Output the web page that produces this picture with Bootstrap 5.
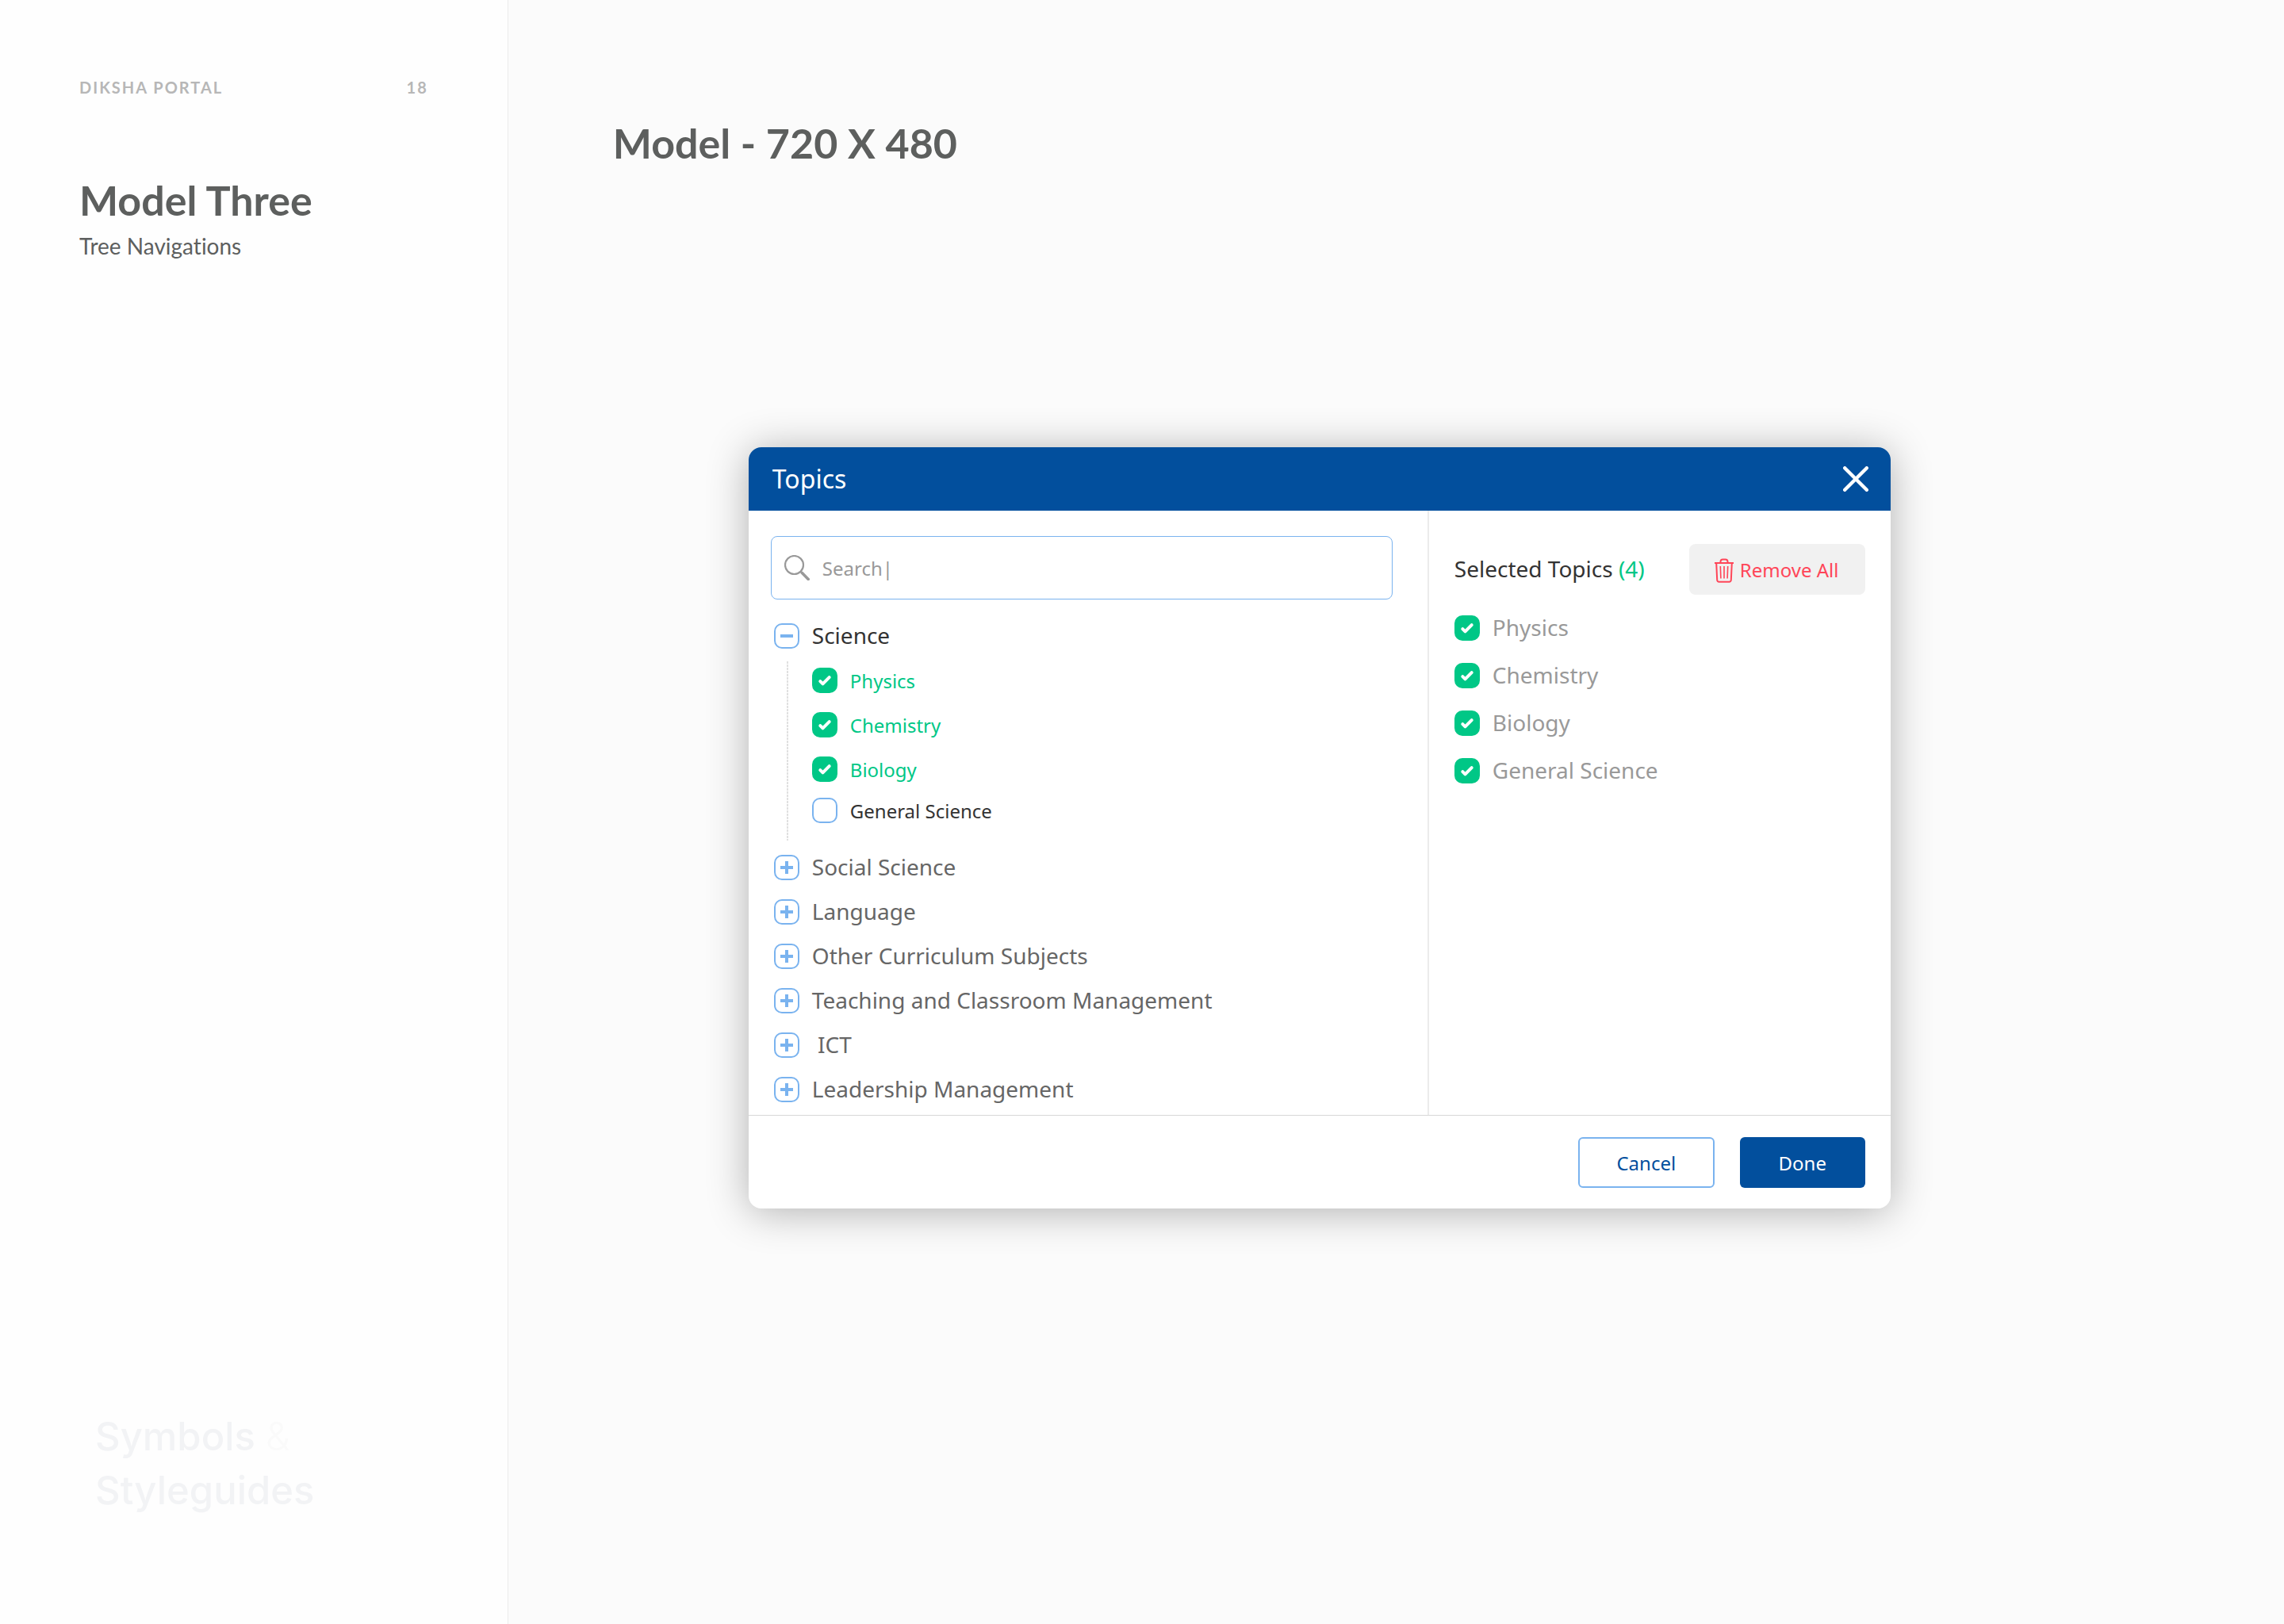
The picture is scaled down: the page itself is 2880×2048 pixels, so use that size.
<!DOCTYPE html>
<html lang="en">
<head>
<meta charset="utf-8">
<meta name="viewport" content="width=device-width, initial-scale=1">
<title>Diksha Portal – Model Three</title>
<link href="https://cdn.jsdelivr.net/npm/bootstrap@5.3.0/dist/css/bootstrap.min.css" rel="stylesheet">
<style>
  :root {
    --brand: #024f9d;
    --sky: #7ab3ef;
    --leaf: #00c786;
    --ink: #333333;
    --slate: #5d5f5e;
  }
  body { background: #fbfbfb; font-family: "Noto Sans", sans-serif; color: var(--ink); }
  .guide-side {
    flex: 0 0 22.25%;
    background: #fefefe;
    border-right: 1px solid #ececec;
    padding: 98px 100px 134px;
    font-family: Lato, sans-serif;
    font-variant-ligatures: none;
    color: var(--slate);
  }
  .guide-meta { font-size: 20px; line-height: 24px; font-weight: 700; letter-spacing: 2px; color: #b7b7b7; margin-bottom: 98px; }
  .guide-title { font-family: Lato, sans-serif; font-size: 52px; line-height: 64px; font-weight: 700; color: var(--slate); margin: 0; }
  .guide-sub { font-size: 28px; line-height: 36px; margin: 8px 0 0; }
  .guide-mark { font-family: Inter, sans-serif; font-size: 49px; line-height: 68px; font-weight: 500; color: #f2f3f5; padding-left: 20px; margin: auto 0 0; }
  .guide-mark span { font-weight: 300; color: #fafafa; }
  .guide-main { padding: 148px 132px; }

  .topics { max-width: 1440px; margin: 352px 0 0 171px; border: 0; border-radius: 16px; background: #fff; box-shadow: 0 4px 52px rgba(0, 0, 0, .3); }
  .topics-head { height: 80px; padding: 0 28px 0 30px; background: var(--brand); color: #fff; border-radius: 16px 16px 0 0; }
  .topics-head h2 { font-size: 32px; line-height: 44px; font-weight: 400; margin: 0; }
  .bare { background: none; border: 0; padding: 0; line-height: 0; }
  .pane-tree { flex: 0 0 858px; border-right: 2px solid #ebebeb; padding: 32px 44px 12px 28px; }
  .pane-picked { padding: 42px 32px 32px; }

  .search-box { height: 80px; border: 1px solid var(--sky); border-radius: 8px; padding: 0 16px; gap: 16px; margin-bottom: 26px; }
  .search-box .form-control { border: 0; padding: 2px 0 0; background: none; box-shadow: none; font-size: 24px; line-height: 36px; color: #999; }

  .tree-list { padding-left: 4px; gap: 16px; }
  .tree-row { height: 40px; gap: 16px; font-size: 28px; line-height: 38px; color: #666; }
  .tree-row span { padding-bottom: 2px; }
  .tree-row.is-open { color: var(--ink); }
  .branch { margin: 12px 0 -2px 16px; padding: 2px 0 20px 32px; gap: 12px; position: relative; }
  .branch::before { content: ""; position: absolute; left: 0; top: 0; bottom: 0; width: 2px; background: repeating-linear-gradient(#e0e0e0 0 3px, transparent 3px 4px); }

  .tick { gap: 16px; min-height: 44px; padding: 0; margin: 0; font-size: 24px; line-height: 34px; }
  .tick label { padding-top: 2px; }
  .tick.is-free { min-height: 36px; }
  .tick .form-check-input { float: none; flex: none; width: 32px; height: 32px; margin: 0; border: 2px solid var(--sky); border-radius: 10px; box-shadow: none; }
  .tick .form-check-input:checked {
    border-color: var(--leaf);
    background-color: var(--leaf);
    background-size: 32px 32px;
    background-origin: border-box;
    background-image: url("data:image/svg+xml,%3csvg xmlns='http://www.w3.org/2000/svg' viewBox='0 0 32 32'%3e%3cpath fill='none' stroke='%23fff' stroke-width='4' stroke-linecap='round' stroke-linejoin='round' d='M10.3 17.2l3.2 3.2 8.2-8.2'/%3e%3c/svg%3e");
  }
  .tick .form-check-input:checked + label { color: var(--leaf); }
  .picked { gap: 16px; margin-top: 20px; }
  .picked .tick { font-size: 28px; line-height: 38px; }
  .picked .tick label { padding: 0 0 2px; }
  .picked .tick .form-check-input:checked + label { color: #999; }
  .picked-title { font-size: 28px; line-height: 38px; font-weight: 400; margin: 0; padding-bottom: 2px; }
  .picked-title span { color: var(--leaf); }

  .act { height: 64px; min-width: 158px; padding: 2px 32px 0; font-size: 24px; line-height: 36px; border-radius: 6px; border: 0; }
  .act-clear { min-width: 222px; background: #f1f1f1; color: #ff4558; border-radius: 8px; gap: 8px; }
  .act-line { min-width: 172px; background: #fff; color: var(--brand); border: 2px solid var(--sky); }
  .act-fill { background: var(--brand); color: #fff; }
  .topics-foot { border-top: 1px solid #d8d8d8; padding: 27px 32px 26px; gap: 32px; }
</style>
</head>
<body>
<svg class="d-none" aria-hidden="true">
  <symbol id="plus" viewBox="0 0 32 32">
    <rect x="1" y="1" width="30" height="30" rx="9" fill="none" stroke="#7ab3ef" stroke-width="2"/>
    <path d="M8 16h16M16 8v16" stroke="#7ab3ef" stroke-width="4"/>
  </symbol>
  <symbol id="minus" viewBox="0 0 32 32">
    <rect x="1" y="1" width="30" height="30" rx="9" fill="none" stroke="#7ab3ef" stroke-width="2"/>
    <path d="M8 16h16" stroke="#7ab3ef" stroke-width="4"/>
  </symbol>
</svg>

<div class="d-flex min-vh-100">
  <aside class="guide-side d-flex flex-column">
    <div class="guide-meta d-flex justify-content-between"><span>DIKSHA PORTAL</span><span>18</span></div>
    <h1 class="guide-title">Model Three</h1>
    <p class="guide-sub">Tree Navigations</p>
    <p class="guide-mark">Symbols <span>&amp;</span><br>Styleguides</p>
  </aside>

  <main class="guide-main flex-grow-1">
    <h2 class="guide-title">Model - 720 X 480</h2>

    <section class="topics card" role="dialog" aria-labelledby="topicsTitle">
      <header class="topics-head d-flex align-items-center justify-content-between">
        <h2 id="topicsTitle">Topics</h2>
        <button type="button" class="bare" aria-label="Close">
          <svg width="32" height="32" viewBox="0 0 32 32"><path d="M2.2 2.2l27.6 27.6M29.8 2.2L2.2 29.8" stroke="#fff" stroke-width="4.4" stroke-linecap="round"/></svg>
        </button>
      </header>

      <div class="d-flex">
        <div class="pane-tree">
          <div class="search-box d-flex align-items-center">
            <svg class="flex-shrink-0" width="32" height="32" viewBox="0 0 32 32" fill="none" stroke="#999" aria-hidden="true"><circle cx="12.5" cy="12.5" r="11.5" stroke-width="2.2"/><path d="M20.8 20.8l2.4 2.4" stroke-width="2.4"/><path d="M22.4 22.6l7.8 7.8" stroke-width="3.6" stroke-linecap="round"/></svg>
            <input type="text" class="form-control" value="Search|" aria-label="Search topics">
          </div>

          <div class="tree-list d-flex flex-column">
            <div>
              <div class="tree-row is-open d-flex align-items-center"><button type="button" class="bare" aria-label="Collapse Science" aria-expanded="true"><svg width="32" height="32"><use href="#minus"/></svg></button><span>Science</span></div>
              <div class="branch d-flex flex-column">
                <div class="tick form-check d-flex align-items-center"><input class="form-check-input" type="checkbox" id="t1" checked><label for="t1">Physics</label></div>
                <div class="tick form-check d-flex align-items-center"><input class="form-check-input" type="checkbox" id="t2" checked><label for="t2">Chemistry</label></div>
                <div class="tick form-check d-flex align-items-center"><input class="form-check-input" type="checkbox" id="t3" checked><label for="t3">Biology</label></div>
                <div class="tick is-free form-check d-flex align-items-center"><input class="form-check-input" type="checkbox" id="t4"><label for="t4">General Science</label></div>
              </div>
            </div>
            <div class="tree-row d-flex align-items-center"><button type="button" class="bare" aria-label="Expand Social Science"><svg width="32" height="32"><use href="#plus"/></svg></button><span>Social Science</span></div>
            <div class="tree-row d-flex align-items-center"><button type="button" class="bare" aria-label="Expand Language"><svg width="32" height="32"><use href="#plus"/></svg></button><span>Language</span></div>
            <div class="tree-row d-flex align-items-center"><button type="button" class="bare" aria-label="Expand Other Curriculum Subjects"><svg width="32" height="32"><use href="#plus"/></svg></button><span>Other Curriculum Subjects</span></div>
            <div class="tree-row d-flex align-items-center"><button type="button" class="bare" aria-label="Expand Teaching and Classroom Management"><svg width="32" height="32"><use href="#plus"/></svg></button><span>Teaching and Classroom Management</span></div>
            <div class="tree-row d-flex align-items-center"><button type="button" class="bare" aria-label="Expand ICT"><svg width="32" height="32"><use href="#plus"/></svg></button><span>&nbsp;ICT</span></div>
            <div class="tree-row d-flex align-items-center"><button type="button" class="bare" aria-label="Expand Leadership Management"><svg width="32" height="32"><use href="#plus"/></svg></button><span>Leadership Management</span></div>
          </div>
        </div>

        <div class="pane-picked flex-grow-1">
          <div class="d-flex align-items-center justify-content-between">
            <h3 class="picked-title">Selected Topics <span>(4)</span></h3>
            <button type="button" class="btn act act-clear d-flex align-items-center">
              <svg class="flex-shrink-0" width="24" height="32" viewBox="0 -1 24 32" fill="none" stroke="#ff4558" aria-hidden="true"><path d="M0 6h24" stroke-width="2"/><path d="M7.5 6V4.2a2.8 2.8 0 0 1 2.8-2.8h3.4a2.8 2.8 0 0 1 2.800 2.800V6" stroke-width="2"/><path d="M2.200 6l1 21.500a2.400 2.400 0 0 0 2.400 2.200h12.800a2.400 2.400 0 0 0 2.400-2.200l1-21.500" stroke-width="2"/><path d="M7.300 10l.6 15.500M12 10v15.500M16.700 10l-.6 15.500" stroke-width="1.600"/></svg>
              <span class="text-nowrap">Remove All</span>
            </button>
          </div>
          <div class="picked d-flex flex-column">
            <div class="tick form-check d-flex align-items-center"><input class="form-check-input" type="checkbox" id="p1" checked><label for="p1">Physics</label></div>
            <div class="tick form-check d-flex align-items-center"><input class="form-check-input" type="checkbox" id="p2" checked><label for="p2">Chemistry</label></div>
            <div class="tick form-check d-flex align-items-center"><input class="form-check-input" type="checkbox" id="p3" checked><label for="p3">Biology</label></div>
            <div class="tick form-check d-flex align-items-center"><input class="form-check-input" type="checkbox" id="p4" checked><label for="p4">General Science</label></div>
          </div>
        </div>
      </div>

      <footer class="topics-foot d-flex justify-content-end">
        <button type="button" class="btn act act-line">Cancel</button>
        <button type="button" class="btn act act-fill">Done</button>
      </footer>
    </section>
  </main>
</div>
<script src="https://cdn.jsdelivr.net/npm/bootstrap@5.3.0/dist/js/bootstrap.bundle.min.js"></script>
</body>
</html>
